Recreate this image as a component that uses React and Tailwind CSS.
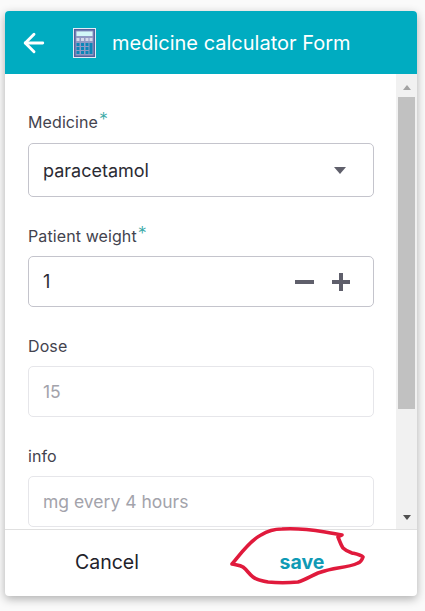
import { ArrowLeft } from "lucide-react";

function Label({ text, required }) {
  return (
    <div className="h-[24px] text-[16px] leading-[24px] tracking-[0.1px] text-[#43434e]">
      {text}
      {required && (
        <span className="relative -top-[2px] ml-[1px] text-[18px] font-light text-[#35a8a6]">*</span>
      )}
    </div>
  );
}

function Calculator() {
  return (
    <svg width="23" height="30" viewBox="0 0 23 30" className="shrink-0">
      <rect x="0.5" y="0.5" width="22" height="29" fill="#54639f" stroke="#e3edf5" />
      <rect x="2.5" y="2.5" width="18" height="25" fill="#8f9ac4" />
      <rect x="3.5" y="3.5" width="16" height="4.5" fill="#d2f7f8" />
      <path d="M3.5 10h3v3h-3zM8 10h3v3H8zM12.5 10h3v3h-3zM16.5 10h3v3h-3z" fill="#d5d9ea" />
      <path
        d="M3.5 15h3v3h-3zM8 15h3v3H8zM12.5 15h3v3h-3zM16.5 15h3v11h-3zM3.5 19h3v3h-3zM8 19h3v3H8zM12.5 19h3v3h-3zM3.5 23h3v3h-3zM8 23h3v3H8zM12.5 23h3v3h-3z"
        fill="#0a86b8"
      />
    </svg>
  );
}

export default function App() {
  return (
    <div className="w-[425px] h-[611px] bg-[#fafafa] pt-[11px] pl-[5px] overflow-hidden font-['Inter',sans-serif]">
      <div className="relative w-[412px] h-[585px] flex flex-col bg-white rounded-[4px] shadow-[0_3px_10px_rgba(0,0,0,0.3)]">
        {/* Header */}
        <div className="h-[63px] shrink-0 flex items-center bg-[#00acc1] rounded-t-[4px] pl-[14px] text-white">
          <ArrowLeft size={30} strokeWidth={2.3} />
          <div className="ml-[24px]">
            <Calculator />
          </div>
          <span className="ml-[16px] text-[20px]">medicine calculator Form</span>
        </div>

        {/* Body */}
        <div className="flex-1 flex min-h-0 border-b border-[#e0e0e0]">
          <div className="flex-1 overflow-hidden pl-[23px] pr-[22px] pt-[36px]">
            <Label text="Medicine" required />
            <div className="mt-[9px] h-[54px] flex items-center justify-between rounded-[5px] border border-[#c4c4cc] pl-[14px] pr-[27px] text-[18px] text-[#2b2b33]">
              paracetamol
              <span className="w-0 h-0 border-x-[6px] border-x-transparent border-t-[7px] border-t-[#5f5f6b]" />
            </div>

            <div className="mt-[27px]">
              <Label text="Patient weight" required />
            </div>
            <div className="mt-[8px] h-[51px] flex items-center justify-between rounded-[5px] border border-[#c4c4cc] pl-[14px] pr-[23px] text-[18px] text-[#2b2b33]">
              1
              <div className="flex items-center gap-[18px]">
                <span className="w-[19px] h-[4px] bg-[#5f5f6b]" />
                <span className="relative w-[18px] h-[18px]">
                  <span className="absolute left-0 top-[7px] w-[18px] h-[4px] bg-[#5f5f6b]" />
                  <span className="absolute top-0 left-[7px] w-[4px] h-[18px] bg-[#5f5f6b]" />
                </span>
              </div>
            </div>

            <div className="mt-[27px]">
              <Label text="Dose" />
            </div>
            <div className="mt-[8px] h-[51px] flex items-center rounded-[5px] border border-[#e6e6ea] pl-[14px] pt-[2px] text-[17.5px] text-[#a3a3ab]">
              15
            </div>

            <div className="mt-[27px]">
              <Label text="info" />
            </div>
            <div className="mt-[8px] h-[51px] flex items-center rounded-[5px] border border-[#e6e6ea] pl-[14px] pt-[2px] text-[17.5px] text-[#a3a3ab]">
              mg every 4 hours
            </div>
          </div>

          {/* Scrollbar */}
          <div className="w-[21px] shrink-0 flex flex-col items-center bg-[#f1f1f1]">
            <span className="mt-[11px] w-0 h-0 border-x-[4px] border-x-transparent border-b-[5px] border-b-[#a3a3a3]" />
            <div className="mt-[7px] w-[17px] h-[312px] bg-[#c1c1c1]" />
            <span className="mt-auto mb-[9px] w-0 h-0 border-x-[4px] border-x-transparent border-t-[5px] border-t-[#505050]" />
          </div>
        </div>

        {/* Footer */}
        <div className="relative h-[66px] shrink-0 flex items-center text-[19.5px]">
          <button className="w-[204px] text-center text-[#22222a]">Cancel</button>
          <button className="w-[186px] text-center text-[19.5px] font-bold text-[#0f9ab5]">save</button>
          <svg className="absolute left-[220px] top-[-10px]" width="145" height="70" viewBox="0 0 145 70" fill="none">
            <path
              d="M7 44C14 36 24 21 36 15C44 10 50 9 57 9C72 8 88 10 100 12C106 13 112 14 117 15L113 17C115 22 116 25 118 28C121 31 124 32 127 33C131 34 136 35 138 37C137 40 136 42 133 43C127 46 120 47 113 48C106 49 99 51 93 53C86 56 80 60 73 62C63 63 52 63 43 62C37 61 32 60 28 57C24 54 22 50 18 47C15 45 11 45 7 44Z"
              stroke="#e01a3c"
              strokeWidth="3.6"
              strokeLinejoin="round"
            />
          </svg>
        </div>
      </div>
    </div>
  );
}
